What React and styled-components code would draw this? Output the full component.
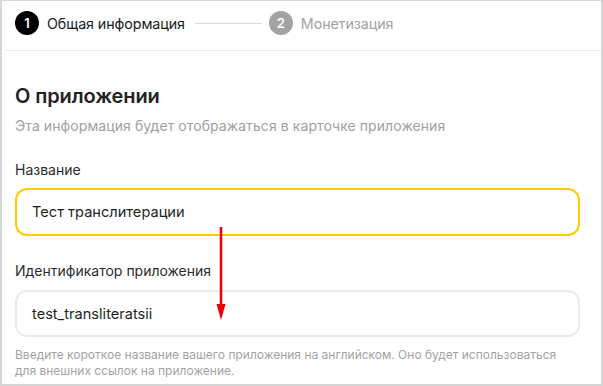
import React from "react";
import styled, { createGlobalStyle } from "styled-components";

const Global = createGlobalStyle`
  html, body { margin: 0; padding: 0; background: #fff; }
  body { font-family: Inter, "Noto Sans", sans-serif; }
  * { box-sizing: border-box; }
`;

const Frame = styled.div`
  position: relative;
  width: 603px;
  height: 386px;
  border: 2px solid #d6d6d6;
  border-top-width: 1px;
  background: #fff;
  overflow: hidden;
  font-family: Inter, "Noto Sans", sans-serif;
`;

const Stepper = styled.div`
  display: flex;
  align-items: center;
  height: 50px;
  padding: 10px 0 15px 13px;
  border-bottom: 1px solid #ededed;
`;

const Step = styled.div`
  display: flex;
  align-items: center;
  gap: 8px;
  color: ${(p) => (p.$active ? "#1a1a1a" : "#a3a3a3")};
  font-size: 14.3px;
  letter-spacing: -0.1px;
`;

const StepNum = styled.span`
  width: 24px;
  height: 24px;
  border-radius: 50%;
  display: flex;
  align-items: center;
  justify-content: center;
  background: ${(p) => (p.$active ? "#000" : "#a3a3a3")};
  color: #fff;
  font-size: 13px;
  font-weight: 600;
`;

const StepLine = styled.div`
  width: 67px;
  height: 1px;
  background: #d9d9d9;
  margin: 0 7px 0 10px;
`;

const Content = styled.div`
  display: flex;
  flex-direction: column;
  padding: 33px 21px 0 13px;
`;

const Title = styled.h2`
  margin: 0;
  font-size: 20px;
  line-height: 24px;
  font-weight: 600;
  color: #222;
  letter-spacing: -0.1px;
`;

const Subtitle = styled.p`
  margin: 8px 0 0;
  font-size: 14px;
  line-height: 20px;
  color: #a0a0a0;
  letter-spacing: 0.08px;
`;

const Label = styled.label`
  margin-top: ${(p) => p.$mt}px;
  font-size: 14px;
  line-height: 20px;
  color: #2b2b2b;
`;

const Field = styled.div`
  margin-top: ${(p) => p.$mt || 8}px;
  height: ${(p) => p.$h}px;
  border: 2px solid ${(p) => (p.$focused ? "#ffcc00" : "#e8ebf4")};
  border-radius: 12px;
  display: flex;
  align-items: center;
  padding: 0 15px;
  font-size: 14.6px;
  color: #1f1f1f;
`;

const Hint = styled.p`
  margin: 10px 0 0;
  font-size: 12px;
  line-height: 16px;
  color: #a3a3a3;
`;

const Arrow = styled.svg`
  position: absolute;
  left: 213px;
  top: 226px;
  pointer-events: none;
`;

export default function App() {
  return (
    <>
      <Global />
      <Frame>
        <Stepper>
          <Step $active>
            <StepNum $active>1</StepNum>
            Общая информация
          </Step>
          <StepLine />
          <Step>
            <StepNum>2</StepNum>
            Монетизация
          </Step>
        </Stepper>
        <Content>
          <Title>О приложении</Title>
          <Subtitle>Эта информация будет отображаться в карточке приложения</Subtitle>
          <Label $mt={24}>Название</Label>
          <Field $focused $h={48}>Тест транслитерации</Field>
          <Label $mt={25}>Идентификатор приложения</Label>
          <Field $h={47} $mt={9}>test_transliteratsii</Field>
          <Hint>
            Введите короткое название вашего приложения на английском. Оно будет использоваться
            для внешних ссылок на приложение.
          </Hint>
        </Content>
        <Arrow width="12" height="95" viewBox="0 0 12 95">
          <line x1="6" y1="0" x2="6" y2="80" stroke="#f00000" strokeWidth="2.6" />
          <polygon points="1.5,77 10.5,77 6,93" fill="#f00000" />
        </Arrow>
      </Frame>
    </>
  );
}
